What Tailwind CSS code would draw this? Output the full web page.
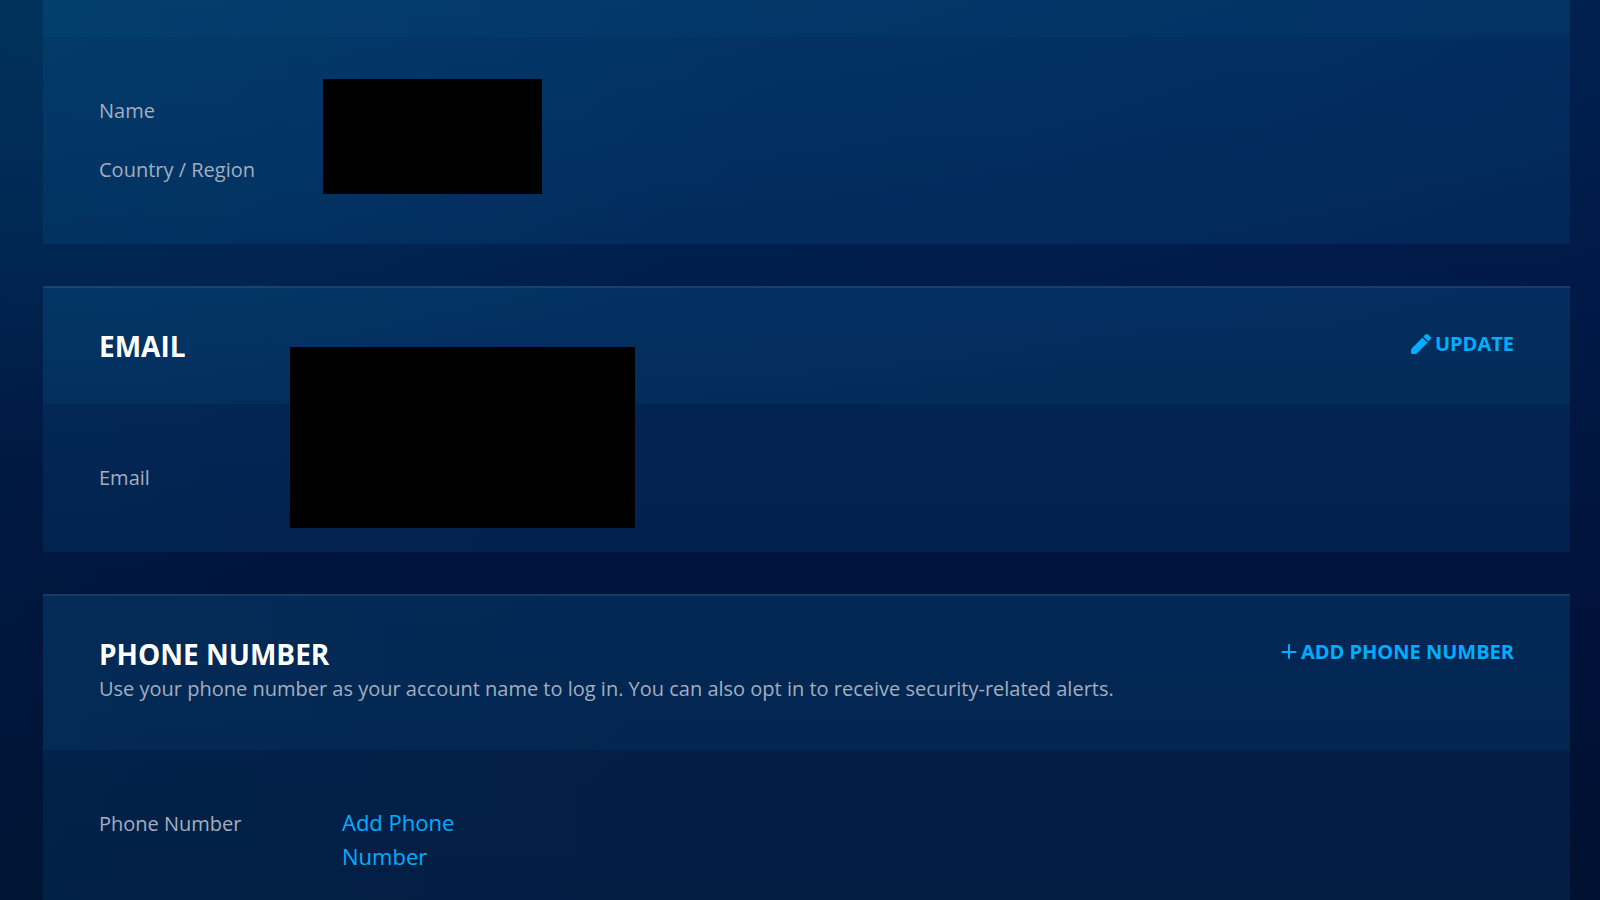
<!DOCTYPE html>
<html lang="en">
<head>
    <meta charset="UTF-8">
    <meta name="viewport" content="width=device-width, initial-scale=1.0">
    <title>Account Details</title>
    <script src="https://cdn.jsdelivr.net/npm/@tailwindcss/browser@4"></script>
    <style>
        body {
            font-family: 'Open Sans', 'Noto Sans', sans-serif;
            background-color: #000f2e;
            background-image:
                radial-gradient(ellipse 800px 480px at 0 0, rgba(0, 64, 104, 0.4), rgba(0, 64, 104, 0)),
                radial-gradient(ellipse 1600px 600px at 32% -180px, rgba(0, 56, 100, 0.65), rgba(0, 56, 100, 0)),
                linear-gradient(to right, rgba(0, 50, 80, 0.12), rgba(0, 50, 80, 0) 40%),
                linear-gradient(to bottom, #001c4c 0%, #001946 33%, #00133c 64%, #001030 100%);
            background-attachment: fixed;
        }
    </style>
</head>
<body class="min-h-screen text-xl leading-[30px] text-[#a3aebf]">
    <main class="flex flex-col gap-[42px] ml-[43px] mr-[30px] pb-10">
        <!-- Personal details -->
        <section class="bg-[#0e86ca]/12">
            <div class="h-[37px] bg-[#1c8cc0]/6"></div>
            <dl class="flex flex-col gap-[29px] px-14 py-[59px] relative">
                <div class="grid grid-cols-[243px_1fr]">
                    <dt>Name</dt>
                    <dd></dd>
                </div>
                <div class="grid grid-cols-[243px_1fr]">
                    <dt>Country / Region</dt>
                    <dd></dd>
                </div>
                <div class="absolute left-[280px] top-[42px] w-[219px] h-[115px] bg-black"></div>
            </dl>
        </section>

        <!-- Email -->
        <section class="relative bg-[#0e86ca]/12">
            <header class="flex justify-between items-start px-14 py-10 border-t-2 border-white/8 bg-[#1c8cc0]/8">
                <h2 class="text-[28px] leading-9 font-bold text-white">EMAIL</h2>
                <button type="button" class="flex items-center gap-1 leading-8 font-bold text-[#00aeff] cursor-pointer hover:text-white">
                    <svg class="w-5 h-5" viewBox="0 0 512 512" fill="currentColor" aria-hidden="true"><path d="M497.9 142.1l-46.1 46.1c-4.7 4.7-12.3 4.7-17 0l-111-111c-4.7-4.7-4.7-12.3 0-17l46.1-46.1c18.7-18.7 49.1-18.7 67.9 0l60.1 60.1c18.8 18.7 18.8 49.1 0 67.9zM284.2 99.8L21.6 362.4C8 376 0 392 0 412v70c0 18 12 30 30 30h70c20 0 36-8 50-21.6l262.6-262.6c4.7-4.7 4.7-12.3 0-17l-111-111c-4.8-4.7-12.4-4.7-17.4 0z"/></svg>
                    UPDATE
                </button>
            </header>
            <dl class="px-14 py-[59px]">
                <div class="grid grid-cols-[243px_1fr]">
                    <dt>Email</dt>
                    <dd></dd>
                </div>
            </dl>
            <div class="absolute left-[247px] top-[61px] w-[345px] h-[181px] bg-black"></div>
        </section>

        <!-- Phone number -->
        <section class="bg-[#0e86ca]/12">
            <header class="flex justify-between items-start px-14 pt-10 pb-11 border-t-2 border-white/8 bg-[#1c8cc0]/8">
                <div>
                    <h2 class="text-[28px] leading-9 font-bold text-white">PHONE NUMBER</h2>
                    <p class="leading-[34px]">Use your phone number as your account name to log in. You can also opt in to receive security-related alerts.</p>
                </div>
                <button type="button" class="flex items-center gap-1 leading-8 font-bold text-[#00aeff] cursor-pointer hover:text-white">
                    <svg class="w-4 h-4" viewBox="0 0 16 16" fill="none" stroke="currentColor" stroke-width="2" stroke-linecap="round" aria-hidden="true"><path d="M8 1v13M1.5 8h13"/></svg>
                    ADD PHONE NUMBER
                </button>
            </header>
            <dl class="px-14 py-[59px]">
                <div class="grid grid-cols-[243px_150px]">
                    <dt>Phone Number</dt>
                    <dd class="-mt-1 text-[22px] leading-[34px]"><a href="#" class="text-[#00aeff] hover:text-white">Add Phone Number</a></dd>
                </div>
            </dl>
        </section>
    </main>
</body>
</html>
